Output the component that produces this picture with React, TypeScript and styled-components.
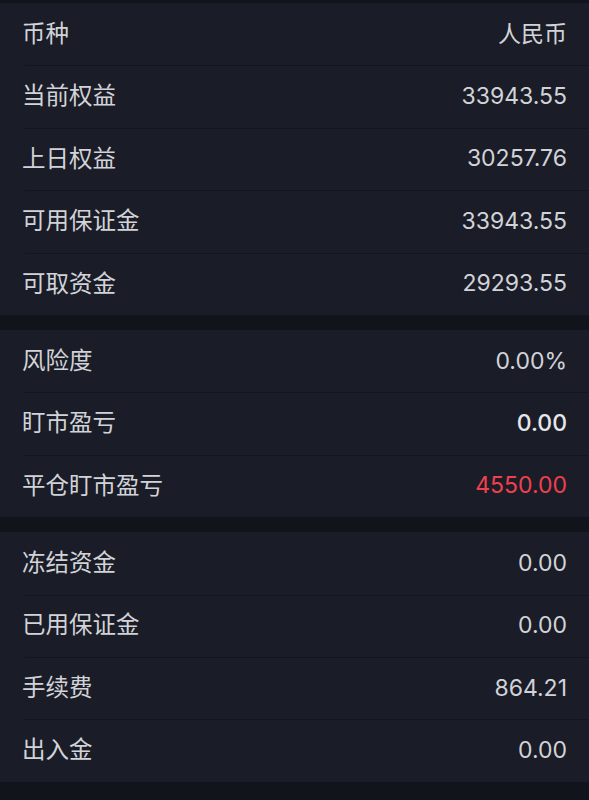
import styled, { createGlobalStyle } from "styled-components";

const GlobalStyle = createGlobalStyle`
    html, body {
        margin: 0;
        padding: 0;
        background: #12141c;
    }
    body {
        font-family: Inter, "Noto Sans CJK SC", sans-serif;
    }
`;

const Page = styled.main`
    width: 589px;
    min-height: 800px;
    padding-top: 3px;
    display: flex;
    flex-direction: column;
    gap: 15px;
    background: #12141c;
`;

const Section = styled.section`
    background: #1a1d27;
    display: flex;
    flex-direction: column;
`;

const Row = styled.div`
    height: 62.4px;
    box-sizing: border-box;
    display: flex;
    align-items: center;
    justify-content: space-between;
    padding: 0 22px 0 22px;
    position: relative;

    & + &::before {
        content: "";
        position: absolute;
        top: 0;
        left: 25px;
        right: 0;
        height: 1px;
        background: #13151d;
    }
`;

const Label = styled.span`
    font-family: "Noto Sans CJK SC", sans-serif;
    font-size: 23.5px;
    line-height: 1;
    padding-bottom: 3px;
    color: #d2d3d8;
`;

const Value = styled.span<{ $tone?: "red" | "strong" }>`
    font-family: Inter, "Noto Sans CJK SC", sans-serif;
    font-size: 23px;
    line-height: 1;
    color: ${(p) => (p.$tone === "red" ? "#f0404e" : p.$tone === "strong" ? "#e6e7ea" : "#d2d3d8")};
    font-weight: ${(p) => (p.$tone === "strong" ? 500 : 400)};
`;

type Item = { label: string; value: string; tone?: "red" | "strong" };

const sections: Item[][] = [
    [
        { label: "币种", value: "人民币" },
        { label: "当前权益", value: "33943.55" },
        { label: "上日权益", value: "30257.76" },
        { label: "可用保证金", value: "33943.55" },
        { label: "可取资金", value: "29293.55" },
    ],
    [
        { label: "风险度", value: "0.00%" },
        { label: "盯市盈亏", value: "0.00", tone: "strong" },
        { label: "平仓盯市盈亏", value: "4550.00", tone: "red" },
    ],
    [
        { label: "冻结资金", value: "0.00" },
        { label: "已用保证金", value: "0.00" },
        { label: "手续费", value: "864.21" },
        { label: "出入金", value: "0.00" },
    ],
];

export default function App() {
    return (
        <>
            <GlobalStyle />
            <Page>
                {sections.map((items, i) => (
                    <Section key={i}>
                        {items.map((it) => (
                            <Row key={it.label}>
                                <Label>{it.label}</Label>
                                <Value $tone={it.tone}>{it.value}</Value>
                            </Row>
                        ))}
                    </Section>
                ))}
            </Page>
        </>
    );
}
